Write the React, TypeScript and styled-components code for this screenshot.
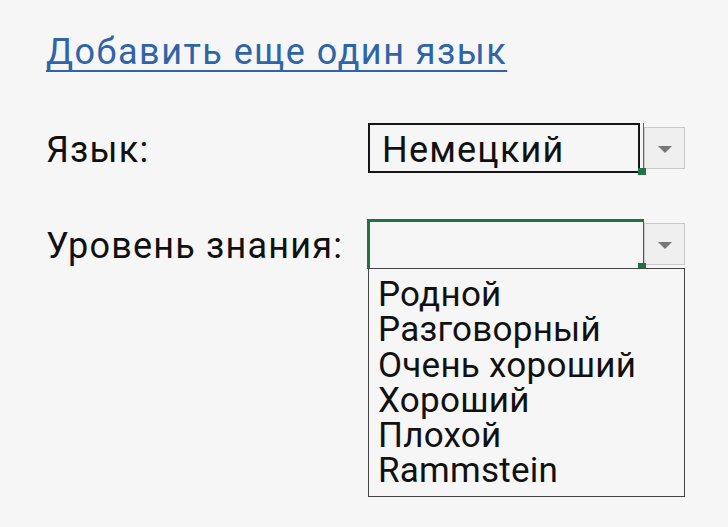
import React from "react";
import styled, { createGlobalStyle } from "styled-components";

const GlobalStyle = createGlobalStyle`
  html, body { margin: 0; padding: 0; background: #f6f6f6; }
  body { font-family: Roboto, "Noto Sans", Arial, sans-serif; color: #111; }
`;

const Page = styled.div`
  width: 728px;
  height: 527px;
  box-sizing: border-box;
  padding: 31px 0 0 46px;
  background: #f6f6f6;
  overflow: hidden;
`;

const AddLink = styled.a`
  display: inline-block;
  font-size: 36px;
  letter-spacing: 1.5px;
  color: #2f64a6;
  text-decoration: underline;
  text-decoration-thickness: 2px;
  text-underline-offset: 6px;
  cursor: pointer;
`;

const Form = styled.div`
  margin-top: 50px;
  display: grid;
  grid-template-columns: 322px auto;
  row-gap: 46px;
  align-items: center;
`;

const Label = styled.div`
  font-size: 36px;
  letter-spacing: 1.2px;
  padding-top: 4px;
`;

const SelectRow = styled.div`
  display: flex;
  align-items: flex-start;
`;

const Cell = styled.div<{ $active?: boolean }>`
  position: relative;
  box-sizing: border-box;
  height: 50px;
  display: flex;
  ${(p) =>
    p.$active
      ? `
    width: 277px;
    margin-left: -1px;
    border-top: 3px solid #217346;
    border-left: 3px solid #217346;
    border-right: 1px solid #2b6b48;
    border-bottom: 1px solid #555;
  `
      : `
    width: 276px;
    padding-right: 3px;
    border-right: 1px solid #3f7a58;
  `}
`;

const Field = styled.div<{ $framed?: boolean }>`
  flex: 1;
  box-sizing: border-box;
  display: flex;
  align-items: center;
  padding: 4px 0 0 12px;
  font-size: 36px;
  letter-spacing: 1.2px;
  border: ${(p) => (p.$framed ? "2px solid #151515" : "none")};
`;

const Handle = styled.span`
  position: absolute;
  right: -3px;
  bottom: -2px;
  width: 8px;
  height: 7px;
  background: #217346;
`;

const DropButton = styled.div`
  box-sizing: border-box;
  margin-top: 4px;
  width: 41px;
  height: 42px;
  background: #efefef;
  border: 1px solid #c9c9c9;
  display: flex;
  align-items: center;
  justify-content: center;
`;

const Triangle = styled.span`
  width: 0;
  height: 0;
  border-left: 7px solid transparent;
  border-right: 7px solid transparent;
  border-top: 7px solid #777;
  margin-top: 2px;
`;

const ListBox = styled.ul`
  position: absolute;
  left: -2px;
  top: 100%;
  margin: 0;
  list-style: none;
  box-sizing: border-box;
  width: 317px;
  height: 229px;
  padding: 8px 0 0 9px;
  background: #f6f6f6;
  border: 1px solid #444;
  z-index: 2;
`;

const ListItem = styled.li`
  font-size: 35px;
  line-height: 35.3px;
  letter-spacing: 0.25px;
  white-space: nowrap;
`;

const levels = ["Родной", "Разговорный", "Очень хороший", "Хороший", "Плохой", "Rammstein"];

export default function App() {
  return (
    <>
      <GlobalStyle />
      <Page>
        <AddLink>Добавить еще один язык</AddLink>
        <Form>
          <Label>Язык:</Label>
          <SelectRow>
            <Cell>
              <Field $framed>Немецкий</Field>
              <Handle />
            </Cell>
            <DropButton>
              <Triangle />
            </DropButton>
          </SelectRow>
          <Label>Уровень знания:</Label>
          <SelectRow>
            <Cell $active>
              <Field />
              <Handle />
              <ListBox>
                {levels.map((l) => (
                  <ListItem key={l}>{l}</ListItem>
                ))}
              </ListBox>
            </Cell>
            <DropButton>
              <Triangle />
            </DropButton>
          </SelectRow>
        </Form>
      </Page>
    </>
  );
}
